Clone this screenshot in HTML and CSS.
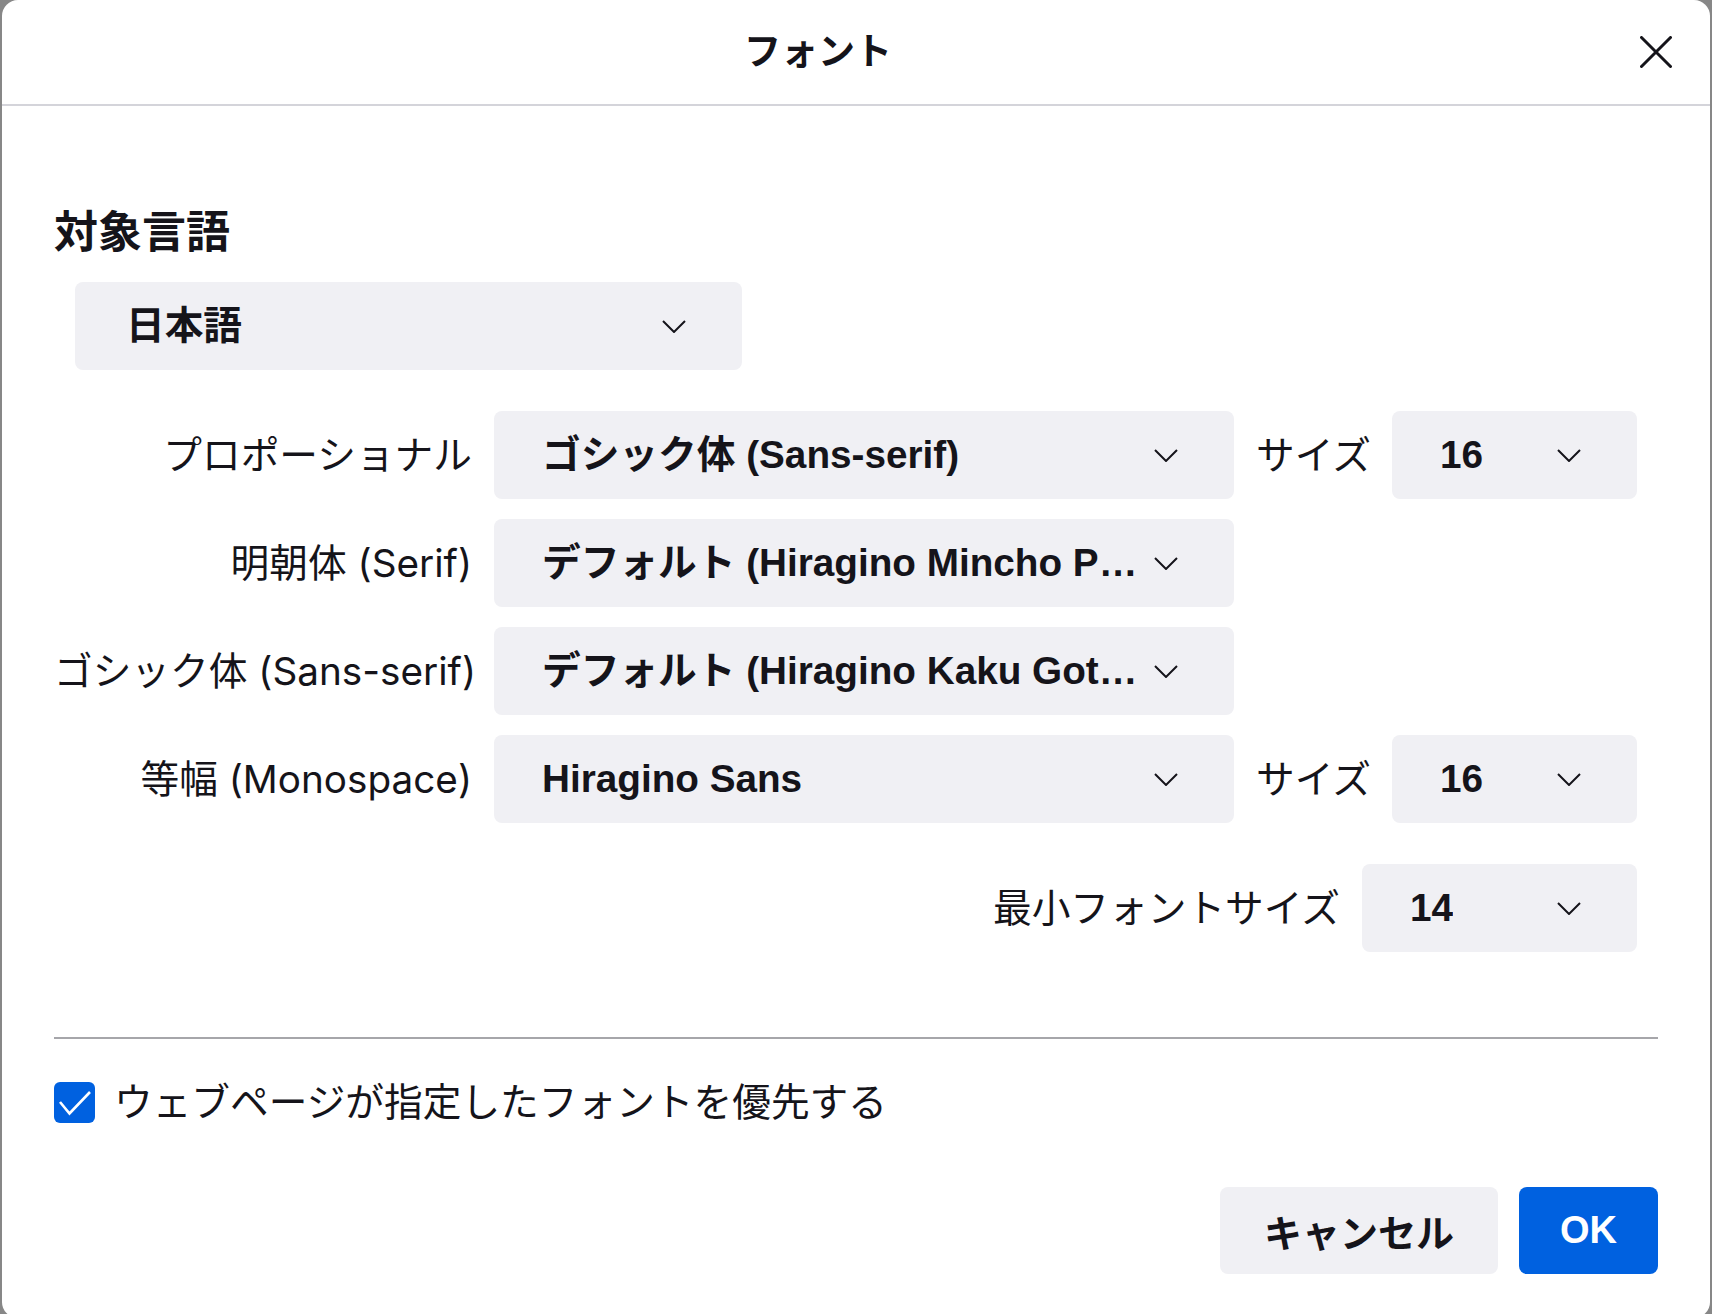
FILE: index.html
```html
<!DOCTYPE html>
<html lang="ja">
<head>
<meta charset="utf-8">
<title>フォント</title>
<link rel="stylesheet" href="styles.css">
</head>
<body>
<div class="dialog">
  <header class="dlg-header">
    <h1 class="dlg-title">フォント</h1>
    <button class="close-btn" aria-label="閉じる">
      <svg width="32" height="32" viewBox="0 0 32 32"><path d="M1.5 1.5 L30.5 30.5 M30.5 1.5 L1.5 30.5" stroke="#15141a" stroke-width="3" stroke-linecap="round" fill="none"/></svg>
    </button>
  </header>
  <main class="dlg-body">
    <h2 class="section-title">対象言語</h2>
    <div class="select lang-select">
      <span class="select-text">日本語</span>
      <svg class="chev" width="24" height="13" viewBox="0 0 24 13"><polyline points="1,1 12,12 23,1" fill="none" stroke="#15141a" stroke-width="2"/></svg>
    </div>

    <div class="fonts">
      <div class="font-grid">
        <span class="row-label">プロポーショナル</span>
        <div class="select">
          <span class="select-text">ゴシック体 (Sans-serif)</span>
          <svg class="chev" width="24" height="13" viewBox="0 0 24 13"><polyline points="1,1 12,12 23,1" fill="none" stroke="#15141a" stroke-width="2"/></svg>
        </div>
        <span class="size-label">サイズ</span>
        <div class="select">
          <span class="select-text">16</span>
          <svg class="chev" width="24" height="13" viewBox="0 0 24 13"><polyline points="1,1 12,12 23,1" fill="none" stroke="#15141a" stroke-width="2"/></svg>
        </div>

        <span class="row-label">明朝体 (Serif)</span>
        <div class="select">
          <span class="select-text">デフォルト (Hiragino Mincho P…</span>
          <svg class="chev" width="24" height="13" viewBox="0 0 24 13"><polyline points="1,1 12,12 23,1" fill="none" stroke="#15141a" stroke-width="2"/></svg>
        </div>

        <span class="row-label">ゴシック体 (Sans-serif)</span>
        <div class="select">
          <span class="select-text">デフォルト (Hiragino Kaku Got…</span>
          <svg class="chev" width="24" height="13" viewBox="0 0 24 13"><polyline points="1,1 12,12 23,1" fill="none" stroke="#15141a" stroke-width="2"/></svg>
        </div>

        <span class="row-label">等幅 (Monospace)</span>
        <div class="select">
          <span class="select-text">Hiragino Sans</span>
          <svg class="chev" width="24" height="13" viewBox="0 0 24 13"><polyline points="1,1 12,12 23,1" fill="none" stroke="#15141a" stroke-width="2"/></svg>
        </div>
        <span class="size-label">サイズ</span>
        <div class="select">
          <span class="select-text">16</span>
          <svg class="chev" width="24" height="13" viewBox="0 0 24 13"><polyline points="1,1 12,12 23,1" fill="none" stroke="#15141a" stroke-width="2"/></svg>
        </div>
      </div>

      <div class="min-row">
        <span class="min-label">最小フォントサイズ</span>
        <div class="select min-select">
          <span class="select-text">14</span>
          <svg class="chev" width="24" height="13" viewBox="0 0 24 13"><polyline points="1,1 12,12 23,1" fill="none" stroke="#15141a" stroke-width="2"/></svg>
        </div>
      </div>
    </div>

    <hr class="sep">

    <label class="check-row">
      <span class="checkbox">
        <svg width="41" height="41" viewBox="0 0 41 41"><polyline points="6,20 15.5,31.5 36,10" fill="none" stroke="#ffffff" stroke-width="2.6" stroke-linejoin="miter"/></svg>
      </span>
      <span class="check-text">ウェブページが指定したフォントを優先する</span>
    </label>

    <div class="actions">
      <button class="btn">キャンセル</button>
      <button class="btn primary">OK</button>
    </div>
  </main>
</div>
</body>
</html>
```

FILE: styles.css
```css
html, body {
  margin: 0;
  padding: 0;
  height: 100%;
  overflow: hidden;
}

body {
  background: #878787;
  font-family: Inter, "Noto Sans CJK JP", sans-serif;
  color: #15141a;
}

.dialog {
  margin-left: 2px;
  width: 1708px;
  height: 1318px;
  background: #ffffff;
  border-radius: 16px;
  box-sizing: border-box;
}

.dlg-header {
  height: 104px;
  border-bottom: 2px solid #d4d4da;
  display: flex;
  align-items: center;
}

.dlg-title {
  flex: 1;
  margin: 0;
  text-align: center;
  font-size: 37px;
  font-weight: 700;
  line-height: 44px;
}

.close-btn {
  width: 44px;
  height: 44px;
  margin-right: 32px;
  padding: 0;
  border: none;
  background: transparent;
  display: flex;
  align-items: center;
  justify-content: center;
}

.dlg-body {
  padding: 0 52px;
}

.section-title {
  margin: 100px 0 0;
  font-size: 44px;
  font-weight: 700;
  line-height: 52px;
}

.select {
  height: 88px;
  background: #f0f0f4;
  border-radius: 8px;
  display: flex;
  align-items: center;
  justify-content: space-between;
  padding: 0 56px 0 48px;
  box-sizing: border-box;
  font-family: "Liberation Sans", "Noto Sans CJK JP", sans-serif;
  font-size: 38.7px;
  font-weight: 700;
  line-height: 44px;
  white-space: nowrap;
  overflow: hidden;
}

.select-text {
  overflow: hidden;
}

.chev {
  flex: none;
  display: block;
}

.lang-select {
  margin: 24px 0 0 21px;
  width: 667px;
  padding-left: 51px;
}

.fonts {
  margin-top: 41px;
  padding-right: 21px;
}

.font-grid {
  display: grid;
  grid-template-columns: 418px 740px 114px 245px;
  column-gap: 22px;
  row-gap: 20px;
  align-items: center;
}

.row-label {
  grid-column: 1;
  text-align: right;
  font-size: 38.7px;
  line-height: 44px;
  white-space: nowrap;
}

.size-label {
  font-size: 38.7px;
  line-height: 44px;
  white-space: nowrap;
}

.min-row {
  margin-top: 41px;
  display: flex;
  justify-content: flex-end;
  align-items: center;
  gap: 22px;
}

.min-label {
  font-size: 38.7px;
  line-height: 44px;
}

.min-select {
  width: 275px;
}

.sep {
  margin: 85px 0 0;
  border: none;
  height: 2px;
  background: #a6a6aa;
}

.check-row {
  margin-top: 41px;
  display: flex;
  align-items: center;
  gap: 19px;
}

.checkbox {
  width: 41px;
  height: 41px;
  border-radius: 6px;
  background: #0061e0;
  display: block;
  flex: none;
}

.checkbox svg {
  display: block;
}

.check-text {
  font-size: 38.7px;
  line-height: 44px;
}

.actions {
  margin-top: 63px;
  display: flex;
  justify-content: flex-end;
  gap: 21px;
}

.btn {
  height: 87px;
  border: none;
  border-radius: 8px;
  background: #f0f0f4;
  color: #15141a;
  font-family: "Liberation Sans", "Noto Sans CJK JP", sans-serif;
  font-size: 38px;
  font-weight: 700;
  padding: 0 44px;
}

.btn.primary {
  background: #0061e0;
  color: #ffffff;
  padding: 0 41px;
}
```
